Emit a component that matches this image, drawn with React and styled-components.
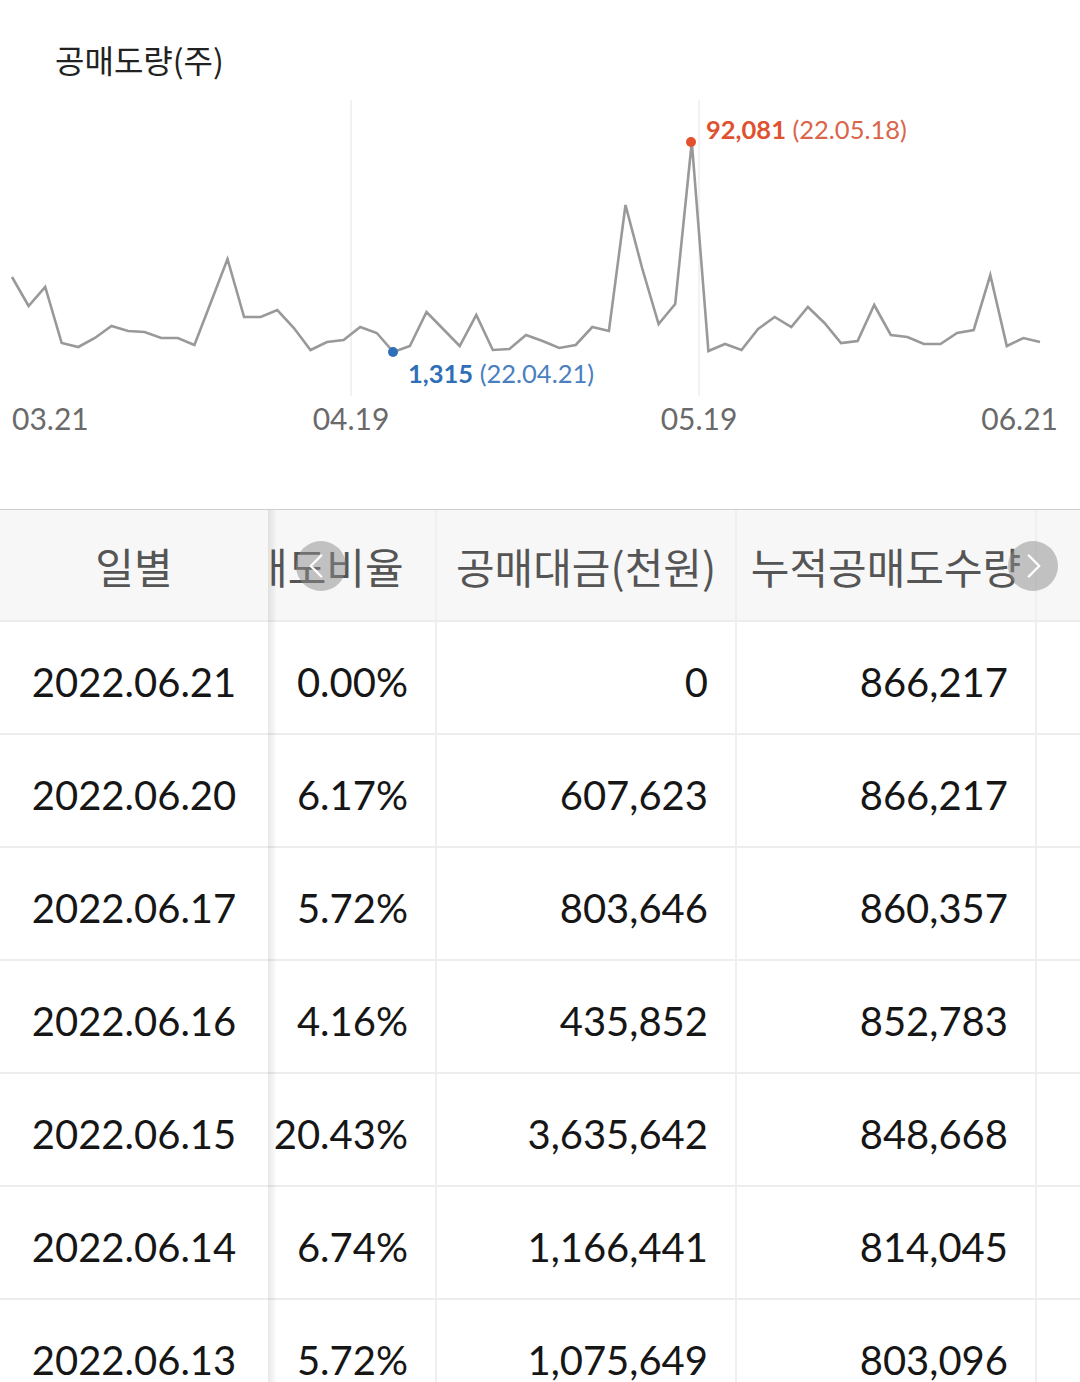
import React, { useLayoutEffect, useRef } from 'react';
import styled, { createGlobalStyle } from 'styled-components';
import { ChevronLeft, ChevronRight } from 'lucide-react';

const GlobalStyle = createGlobalStyle`
  body {
    margin: 0;
    background: #fff;
    font-family: 'Lato', 'Noto Sans CJK KR', sans-serif;
    color: #1a1a1a;
  }
`;

// 공매도량 (y values in page coordinates, one per trading day)
const volume = [277,306,287,343,347,338,326,331,332,338,338,345,302,259,317,317,310,328,350,342,340,327,333,352,346,312,329,346,315,350,349,335,341,348,345,327,331,205,268,324,304,142,351,344,350,329,317,327,307,323,343,341,305,335,337,344,344,333,330,275,346,338,342];

const rows = [
  ['2022.06.21', '0.00%', '0', '866,217'],
  ['2022.06.20', '6.17%', '607,623', '866,217'],
  ['2022.06.17', '5.72%', '803,646', '860,357'],
  ['2022.06.16', '4.16%', '435,852', '852,783'],
  ['2022.06.15', '20.43%', '3,635,642', '848,668'],
  ['2022.06.14', '6.74%', '1,166,441', '814,045'],
  ['2022.06.13', '5.72%', '1,075,649', '803,096'],
];

const Page = styled.div`
  width: 1080px;
`;

const ChartHead = styled.div`
  height: 62px;
  padding: 28px 0 0 55px;
  display: flex;
  align-items: center;
  font-family: 'Noto Sans CJK KR', sans-serif;
  font-size: 32px;
  color: #222;
`;

const ChartSvg = styled.svg`
  display: block;
  width: 1080px;
  height: 360px;
  font-family: 'Lato', sans-serif;
`;

const TableBox = styled.div`
  position: relative;
  margin-top: 59px;
  border-top: 1px solid #cfcfcf;
`;

const Scroller = styled.div`
  overflow-x: auto;
  scrollbar-width: none;
  &::-webkit-scrollbar {
    display: none;
  }
`;

const Table = styled.table`
  border-collapse: separate;
  border-spacing: 0;
  table-layout: fixed;
  width: 1426px;
`;

const Cell = styled.td`
  box-sizing: border-box;
  height: 113px;
  padding: 8px 27px 0 0;
  text-align: right;
  font-size: 40px;
  color: #161616;
  border-bottom: 2px solid #ededed;
  border-right: 2px solid #efefef;
  white-space: nowrap;
  overflow: hidden;

  &:first-child {
    position: sticky;
    left: 0;
    z-index: 2;
    background: #fff;
    text-align: center;
    padding-right: 0;
    border-right: none;
    overflow: visible;
  }
  &:first-child::after {
    content: '';
    position: absolute;
    top: 0;
    bottom: -2px;
    right: -9px;
    width: 9px;
    background: linear-gradient(to right, rgba(0, 0, 0, 0.09), rgba(0, 0, 0, 0));
  }
`;

const HeadCell = styled(Cell).attrs({ as: 'th' })`
  height: 112px;
  padding: 0;
  text-align: center;
  font-family: 'Noto Sans CJK KR', sans-serif;
  font-weight: 400;
  font-size: 42px;
  color: #555;
  background: #f7f7f7;

  &:first-child {
    background: #f7f7f7;
  }
`;

const ScrollButton = styled.div`
  position: absolute;
  top: 31px;
  ${(p) => (p.side === 'left' ? 'left: 296px;' : 'left: 1008px;')}
  width: 50px;
  height: 50px;
  border-radius: 50%;
  background: rgba(140, 140, 140, 0.5);
  display: flex;
  align-items: center;
  justify-content: center;
  color: #fff;
  z-index: 3;
`;

function VolumeChart() {
  const step = 1028 / (volume.length - 1);
  const pts = volume.map((y, i) => `${(12 + i * step).toFixed(1)},${y}`).join(' ');
  return (
    <ChartSvg viewBox="0 90 1080 360">
      <line x1="351" y1="100" x2="351" y2="396" stroke="#eeeeee" strokeWidth="1.5" />
      <line x1="699" y1="100" x2="699" y2="396" stroke="#eeeeee" strokeWidth="1.5" />
      <polyline points={pts} fill="none" stroke="#999" strokeWidth="2.6" strokeLinejoin="miter" />
      <circle cx="691" cy="142" r="5" fill="#e4502e" />
      <circle cx="393" cy="352" r="5" fill="#2f6fb8" />
      <text x="706" y="139" fontSize="25.5" fill="#e0522f">
        <tspan fontWeight="700">92,081</tspan>
        <tspan fill="#d9664b"> (22.05.18)</tspan>
      </text>
      <text x="408" y="383" fontSize="25.5" fill="#2f6fb8">
        <tspan fontWeight="700">1,315</tspan>
        <tspan fill="#4a80bf"> (22.04.21)</tspan>
      </text>
      <g fontSize="30" fill="#6a6a6a">
        <text x="12" y="430">03.21</text>
        <text x="351" y="430" textAnchor="middle">04.19</text>
        <text x="699" y="430" textAnchor="middle">05.19</text>
        <text x="1058" y="430" textAnchor="end">06.21</text>
      </g>
    </ChartSvg>
  );
}

export default function App() {
  const scrollRef = useRef(null);
  useLayoutEffect(() => {
    if (scrollRef.current) scrollRef.current.scrollLeft = 89;
  }, []);

  return (
    <Page>
      <GlobalStyle />
      <ChartHead>공매도량(주)</ChartHead>
      <VolumeChart />
      <TableBox>
        <Scroller ref={scrollRef}>
          <Table>
            <colgroup>
              <col style={{ width: 268 }} />
              <col style={{ width: 258 }} />
              <col style={{ width: 300 }} />
              <col style={{ width: 300 }} />
              <col style={{ width: 300 }} />
            </colgroup>
            <thead>
              <tr>
                <HeadCell>일별</HeadCell>
                <HeadCell>공매도비율</HeadCell>
                <HeadCell>공매대금(천원)</HeadCell>
                <HeadCell>누적공매도수량</HeadCell>
                <HeadCell></HeadCell>
              </tr>
            </thead>
            <tbody>
              {rows.map((r) => (
                <tr key={r[0]}>
                  {r.map((v, i) => (
                    <Cell key={i}>{v}</Cell>
                  ))}
                  <Cell></Cell>
                </tr>
              ))}
            </tbody>
          </Table>
        </Scroller>
        <ScrollButton side="left">
          <ChevronLeft size={42} strokeWidth={1.4} style={{ marginLeft: -10 }} />
        </ScrollButton>
        <ScrollButton side="right">
          <ChevronRight size={42} strokeWidth={1.4} style={{ marginLeft: 2 }} />
        </ScrollButton>
      </TableBox>
    </Page>
  );
}
